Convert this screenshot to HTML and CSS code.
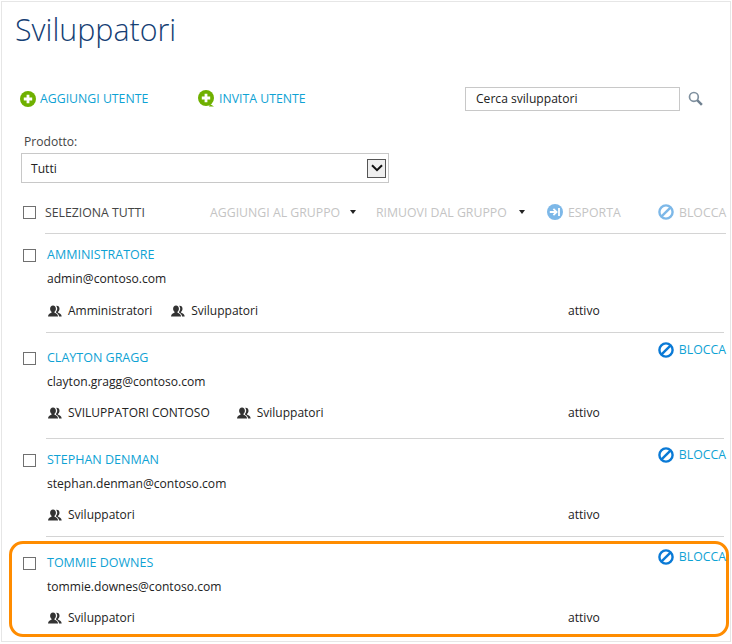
FILE: index.html
```html
<!DOCTYPE html>
<html lang="it">
<head>
<meta charset="utf-8">
<title>Sviluppatori</title>
<link rel="stylesheet" href="styles.css">
</head>
<body>
<svg class="defs" width="0" height="0" aria-hidden="true">
  <defs>
    <symbol id="i-block" viewBox="0 0 16 16">
      <circle cx="8" cy="8" r="6.6" fill="none" stroke="currentColor" stroke-width="2.4"/>
      <path d="M3.6 12.4 12.4 3.6" stroke="currentColor" stroke-width="2.4"/>
    </symbol>
    <symbol id="i-group" viewBox="0 0 14 13">
      <path d="M5 .6c1.8 0 2.9 1.4 2.9 3.1 0 1.3-.6 2.5-1.4 3.1v1c1.9.5 3.3 1.4 3.6 3.7H0c.2-2.3 1.600-3.200 3.500-3.700v-1C2.700 6.200 2.100 5 2.100 3.700 2.100 2 3.200.6 5 .6Z" fill="#333"/>
      <path d="M8.700.8c1.800 0 2.800 1.300 2.800 3 0 1.300-.6 2.400-1.400 3v1c1.900.5 3.400 1.400 3.600 3.700h-2.600c-.3-1.800-1.200-3-3-3.700V6.600c.7-.7 1.100-1.800 1.100-2.900 0-1.100-.4-2.100-1-2.700.2-.1.300-.2.500-.2Z" fill="#333"/>
    </symbol>
  </defs>
</svg>

<main class="page">
  <h1 class="title">Sviluppatori</h1>

  <div class="toolbar">
    <a class="add add-user">
      <svg class="add-icon" viewBox="0 0 16 16"><circle cx="8" cy="8" r="8" fill="#6fb000"/><path d="M8 3.800v8.400M3.800 8h8.400" stroke="#fff" stroke-width="2.800"/></svg>
      AGGIUNGI UTENTE
    </a>
    <a class="add add-invite">
      <svg class="add-icon" viewBox="0 0 18 17"><path d="M12 14l4 2.600h-5z" fill="#6fb000"/><circle cx="8" cy="8" r="8" fill="#6fb000"/><path d="M8 3.800v8.400M3.800 8h8.400" stroke="#fff" stroke-width="2.800"/></svg>
      INVITA UTENTE
    </a>
    <div class="search">
      <input class="search-input" type="text" value="Cerca sviluppatori">
      <svg class="search-icon" viewBox="0 0 16 16"><circle cx="6.300" cy="6.300" r="4.700" fill="none" stroke="#7f909f" stroke-width="1.800"/><path d="M9.800 9.800 14.800 14.800" stroke="#6f8090" stroke-width="2.600"/></svg>
    </div>
  </div>

  <div class="filter">
    <div class="filter-label">Prodotto:</div>
    <div class="select">
      <span>Tutti</span>
      <span class="select-btn"><svg viewBox="0 0 12 8" width="12" height="8"><path d="M1 1.200 6 6.200 11 1.200" fill="none" stroke="#111" stroke-width="2"/></svg></span>
    </div>
  </div>

  <div class="bulk">
    <span class="check"></span>
    <div class="bulk-main">
      <span class="select-all">SELEZIONA TUTTI</span>
      <span class="bulk-action act-add">AGGIUNGI AL GRUPPO<i class="caret"></i></span>
      <span class="bulk-action act-remove">RIMUOVI DAL GRUPPO<i class="caret"></i></span>
      <span class="bulk-action act-export">
        <svg class="act-icon" viewBox="0 0 16 16"><circle cx="8" cy="8" r="8" fill="#7db8e8"/><path d="M2.800 8h6.200M6.400 4.800 9.600 8l-3.200 3.200M12 4v8" fill="none" stroke="#fff" stroke-width="1.800"/></svg>
        ESPORTA
      </span>
      <span class="bulk-action act-block">
        <svg class="act-icon icon-block-off"><use href="#i-block"/></svg>
        BLOCCA
      </span>
    </div>
  </div>

  <section class="row row-a">
    <span class="check"></span>
    <div class="row-main">
      <div class="row-top"><a class="name">AMMINISTRATORE</a></div>
      <div class="email">admin@contoso.com</div>
      <div class="row-bottom">
        <div class="groups">
          <span class="group"><svg class="group-icon"><use href="#i-group"/></svg>Amministratori</span>
          <span class="group"><svg class="group-icon"><use href="#i-group"/></svg>Sviluppatori</span>
        </div>
        <span class="status">attivo</span>
      </div>
    </div>
  </section>

  <section class="row row-b">
    <span class="check"></span>
    <div class="row-main">
      <div class="row-top"><a class="name">CLAYTON GRAGG</a><a class="block"><svg class="act-icon icon-block"><use href="#i-block"/></svg>BLOCCA</a></div>
      <div class="email">clayton.gragg@contoso.com</div>
      <div class="row-bottom">
        <div class="groups">
          <span class="group group-wide"><svg class="group-icon"><use href="#i-group"/></svg>SVILUPPATORI CONTOSO</span>
          <span class="group"><svg class="group-icon"><use href="#i-group"/></svg>Sviluppatori</span>
        </div>
        <span class="status">attivo</span>
      </div>
    </div>
  </section>

  <section class="row row-c">
    <span class="check"></span>
    <div class="row-main">
      <div class="row-top"><a class="name">STEPHAN DENMAN</a><a class="block"><svg class="act-icon icon-block"><use href="#i-block"/></svg>BLOCCA</a></div>
      <div class="email">stephan.denman@contoso.com</div>
      <div class="row-bottom">
        <div class="groups">
          <span class="group"><svg class="group-icon"><use href="#i-group"/></svg>Sviluppatori</span>
        </div>
        <span class="status">attivo</span>
      </div>
    </div>
  </section>

  <section class="row row-d">
    <span class="check"></span>
    <div class="row-main">
      <div class="row-top"><a class="name">TOMMIE DOWNES</a><a class="block"><svg class="act-icon icon-block"><use href="#i-block"/></svg>BLOCCA</a></div>
      <div class="email">tommie.downes@contoso.com</div>
      <div class="row-bottom">
        <div class="groups">
          <span class="group"><svg class="group-icon"><use href="#i-group"/></svg>Sviluppatori</span>
        </div>
        <span class="status">attivo</span>
      </div>
    </div>
  </section>
</main>
</body>
</html>
```
FILE: styles.css
```css
* { box-sizing: border-box; }

html, body { margin: 0; padding: 0; background: #fff; }

body {
  font-family: "Open Sans", "Noto Sans", sans-serif;
  font-size: 12.100px;
  color: #222;
  overflow: hidden;
}

.defs { display: block; height: 0; }

.page {
  width: 730px;
  height: 641px;
  margin: 1px 0 0 1px;
  border: 1px solid #e6e6e6;
  overflow: hidden;
}

.title {
  margin: 0;
  padding: 6px 0 0 13px;
  height: 80px;
  font-size: 30.400px;
  line-height: 44px;
  font-weight: 300;
  color: #154074;
}

.toolbar {
  display: flex;
  align-items: center;
  height: 33px;
}

.add {
  display: flex;
  align-items: center;
  gap: 4px;
  color: #0ea2d4;
  font-size: 12.300px;
  white-space: nowrap;
}

.add-user { margin-left: 18px; width: 178px; }
.add-invite { width: 267px; gap: 3px; }

.add-icon { width: 16px; height: 16px; flex: none; overflow: visible; }
.add-invite .add-icon { width: 18px; height: 17px; }

.search { display: flex; align-items: center; gap: 8px; }

.search-input {
  width: 215px;
  height: 24px;
  padding: 0 10px;
  border: 1px solid #c8c8c8;
  font: inherit;
  color: #222;
  background: #fff;
}

.search-icon { width: 15px; height: 15px; }

.filter { padding: 0 0 0 19px; margin-top: 17px; }

.filter-label { padding-left: 3px; height: 21px; line-height: 20px; color: #444; }

.select {
  display: flex;
  align-items: center;
  justify-content: space-between;
  width: 368px;
  height: 30px;
  padding: 0 2px 0 9px;
  border: 1px solid #c8c8c8;
  color: #222;
}

.select-btn {
  display: flex;
  align-items: center;
  justify-content: center;
  width: 19px;
  height: 19px;
  border: 1px solid #555;
  background: #efefef;
}

.check {
  display: block;
  flex: none;
  width: 13px;
  height: 13px;
  border: 1px solid #707070;
  background: #fff;
}

.bulk {
  display: flex;
  align-items: flex-start;
  height: 51px;
  margin: 0 6px 0 21px;
}

.bulk .check { margin-top: 23px; }

.bulk-main {
  display: flex;
  align-items: center;
  flex: 1;
  height: 51px;
  margin-left: 9px;
  padding-top: 8px;
  border-bottom: 1px solid #d4d4d4;
  white-space: nowrap;
}

.select-all { color: #444; font-size: 12.300px; width: 165px; }

.bulk-action {
  display: inline-flex;
  align-items: center;
  color: #c4c4c4;
  font-size: 12.300px;
}

.act-add { flex: none; width: 166px; }
.act-remove { flex: none; width: 171px; }
.act-remove .caret { margin-left: 12px; }
.act-export { flex: none; width: 111px; gap: 5px; }
.act-block { flex: none; gap: 5px; }

.caret {
  display: inline-block;
  margin-left: 10px;
  border-left: 3.500px solid transparent;
  border-right: 3.500px solid transparent;
  border-top: 4px solid #222;
}

.act-icon { width: 16px; height: 16px; flex: none; }

.icon-block-off { color: #7db8e8; }
.icon-block { color: #0a7ad6; }

.row {
  display: flex;
  align-items: flex-start;
  margin: 0 6px 0 21px;
}

.row-main {
  flex: 1;
  margin-left: 10px;
  border-bottom: 1px solid #d4d4d4;
}

.row-top {
  display: flex;
  justify-content: space-between;
  align-items: flex-start;
}

.name {
  color: #0ea2d4;
  font-size: 12.500px;
  line-height: 20px;
  padding-left: 1px;
}

.block {
  display: flex;
  align-items: center;
  gap: 5px;
  margin-right: -2px;
  color: #0ea2d4;
  font-size: 12.300px;
  line-height: 20px;
}

.email { padding-left: 1px; margin-top: 4px; line-height: 20px; color: #222; }

.row-bottom { display: flex; line-height: 20px; margin-top: 11px; }

.groups { display: flex; flex: none; width: 522px; padding-left: 2px; font-size: 12px; }

.group { display: inline-flex; align-items: center; margin-right: 19px; white-space: nowrap; }
.group-wide { margin-right: 27px; }

.group-icon { width: 14px; height: 13px; margin-right: 6px; flex: none; }

.status { padding-left: 0; }

.row-a .check { margin-top: 15px; }
.row-a .row-top { padding-top: 11px; }
.row-a .row-bottom { margin-top: 12px; }
.row-a .row-main { height: 99px; }

.row-b .check { margin-top: 19px; }
.row-b .row-top { padding-top: 7px; }
.row-b .name { margin-top: 8px; }
.row-b .row-main { height: 106px; }

.row-c .check { margin-top: 15px; }
.row-c .row-top { padding-top: 6px; }
.row-c .name { margin-top: 5px; }
.row-c .row-main { height: 98px; }

.row-d {
  width: 720px;
  height: 96px;
  margin: 4px 0 0 7px;
  padding: 0 0 0 11px;
  border: 3px solid #ff8c00;
  border-radius: 14px;
}

.row-d .check { margin-top: 13px; }
.row-d .row-main { border-bottom: 0; }
.row-d .row-top { padding-top: 3px; }
.row-d .name { margin-top: 6px; }
.row-d .block { margin-right: 0; }
```
